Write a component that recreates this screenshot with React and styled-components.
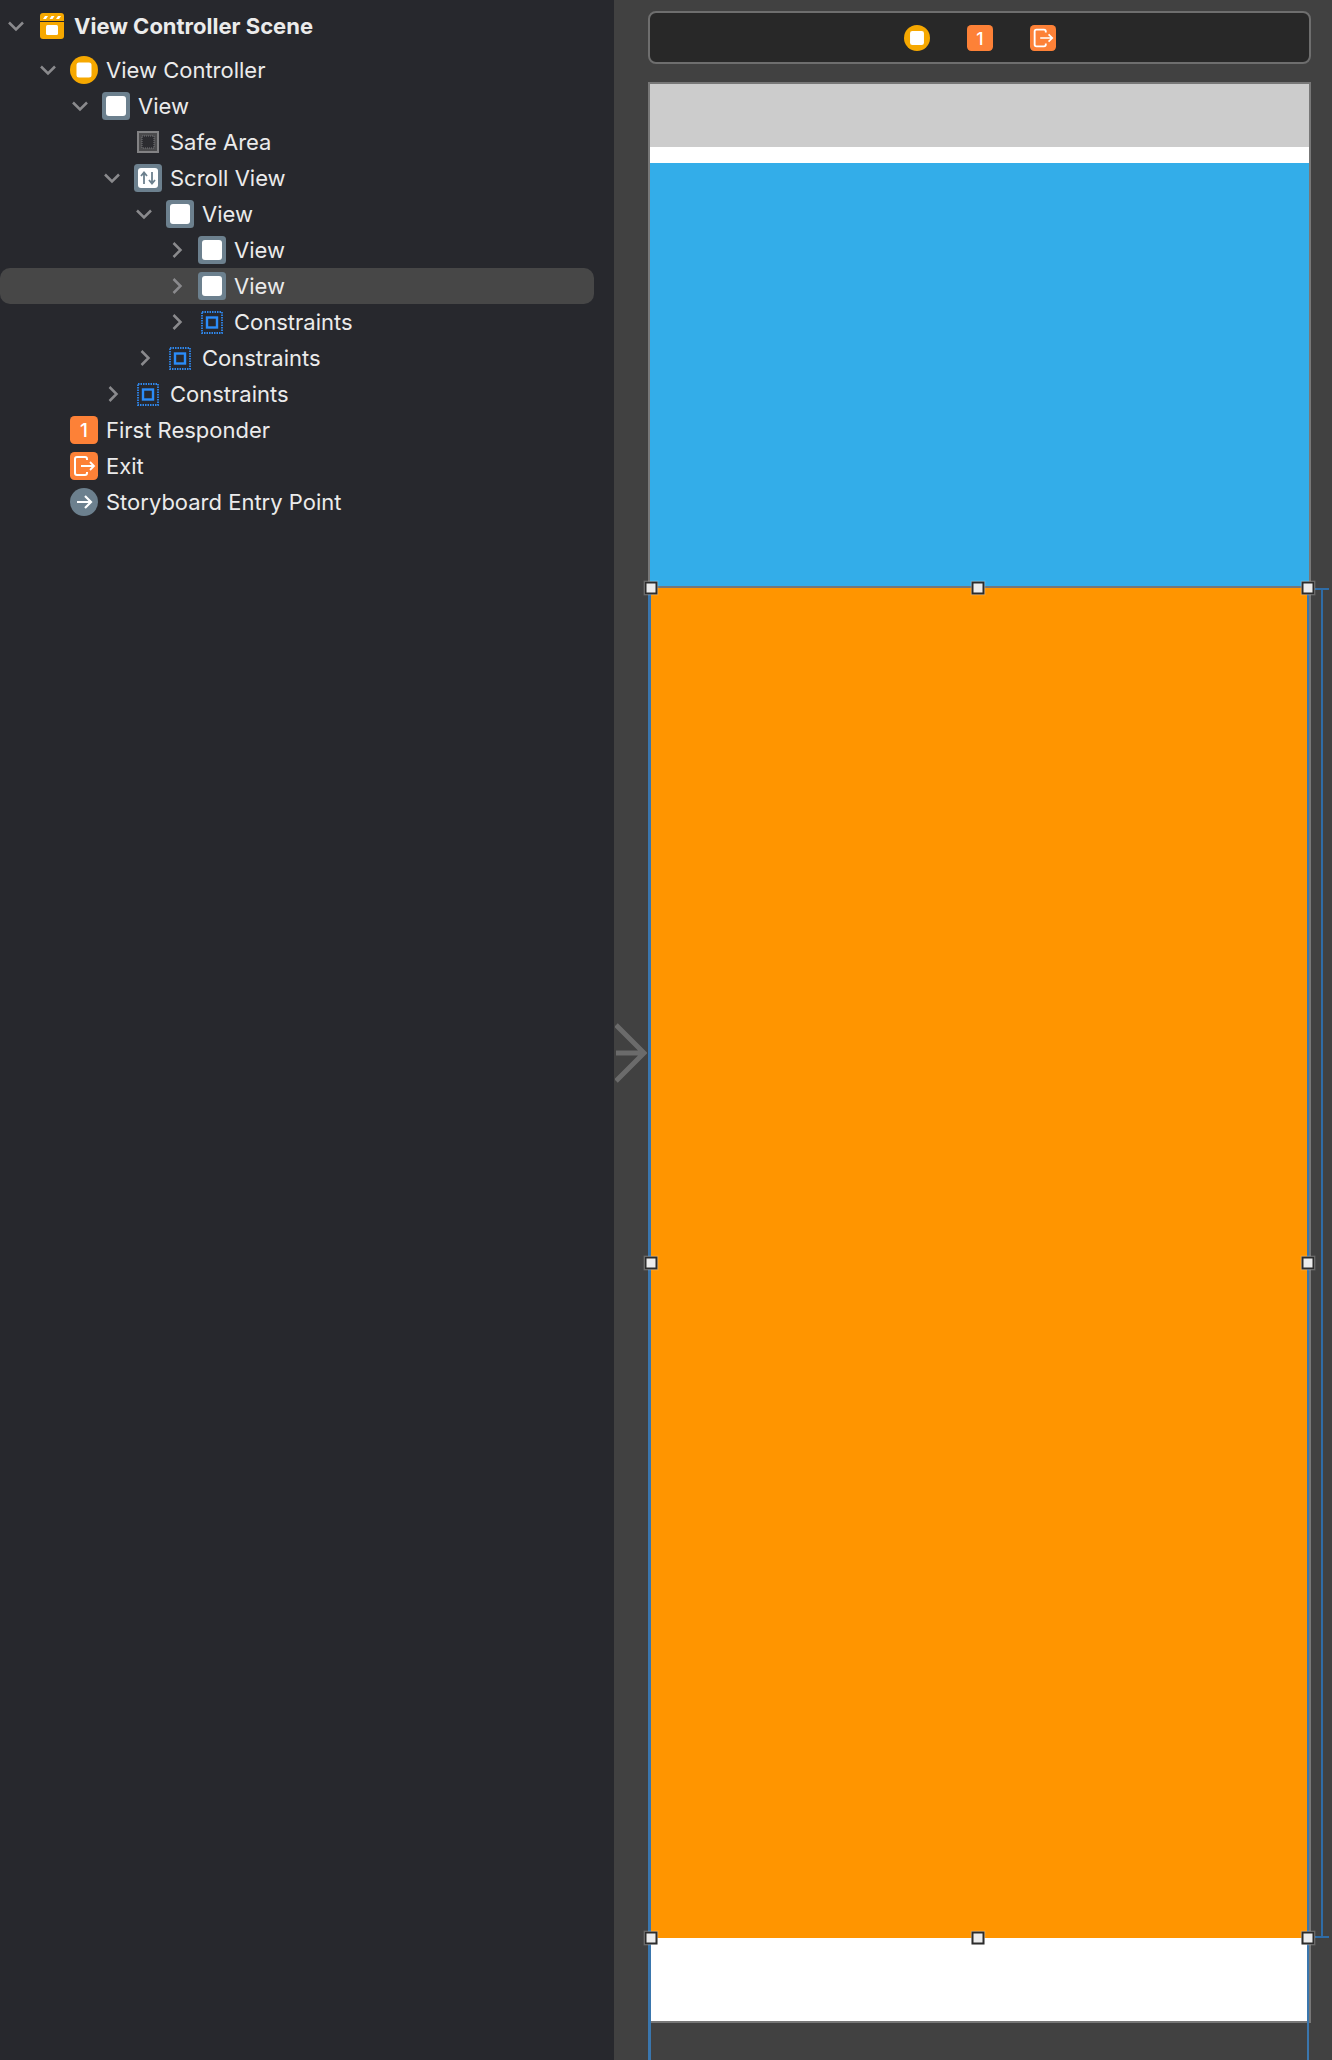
import React from "react";
import styled, { createGlobalStyle } from "styled-components";

const GlobalStyle = createGlobalStyle`
  html, body {
    margin: 0;
    padding: 0;
    background: #414141;
  }
`;

const treeItems = [
  { label: "View Controller", level: 1, arrow: "down", icon: "controller" },
  { label: "View", level: 2, arrow: "down", icon: "view" },
  { label: "Safe Area", level: 3, icon: "safe" },
  { label: "Scroll View", level: 3, arrow: "down", icon: "scroll" },
  { label: "View", level: 4, arrow: "down", icon: "view" },
  { label: "View", level: 5, arrow: "right", icon: "view" },
  { label: "View", level: 5, arrow: "right", icon: "view", selected: true },
  { label: "Constraints", level: 5, arrow: "right", icon: "constraints" },
  { label: "Constraints", level: 4, arrow: "right", icon: "constraints" },
  { label: "Constraints", level: 3, arrow: "right", icon: "constraints" },
  { label: "First Responder", level: 1, icon: "responder" },
  { label: "Exit", level: 1, icon: "exit" },
  { label: "Storyboard Entry Point", level: 1, icon: "entry" },
];

const handles = [
  ["0.2%", "0%"],
  ["49.8%", "0%"],
  ["99.8%", "0%"],
  ["0.2%", "50%"],
  ["99.8%", "50%"],
  ["0.2%", "100%"],
  ["49.8%", "100%"],
  ["99.8%", "100%"],
];

const Icon = ({ name, size = 28 }) => {
  if (name === "scene") {
    return (
      <svg width="24" height="26" viewBox="0 0 24 26">
        <path d="M3 0h18a3 3 0 0 1 3 3v5H0V3a3 3 0 0 1 3-3z" fill="#f6a800" />
        <path d="M0 9h24v14a3 3 0 0 1-3 3H3a3 3 0 0 1-3-3z" fill="#f6a800" />
        <path d="M3 6l2-3h3L6 6zM9.5 6l2-3h3l-2 3zM16 6l2-3h3l-2 3z" fill="#fff" />
        <rect x="6" y="12" width="12" height="10" rx="1.5" fill="#fff" />
      </svg>
    );
  }
  if (name === "controller") {
    return (
      <svg width={size} height={size} viewBox="0 0 28 28">
        <circle cx="14" cy="14" r="14" fill="#f6a800" />
        <rect x="6.5" y="6.5" width="15" height="15" rx="2.5" fill="#fff" />
      </svg>
    );
  }
  if (name === "view") {
    return (
      <svg width={size} height={size} viewBox="0 0 28 28">
        <rect width="28" height="28" rx="3.5" fill="#6c808e" />
        <rect x="4" y="4" width="20" height="20" rx="3" fill="#fff" />
      </svg>
    );
  }
  if (name === "safe") {
    return (
      <svg width={size} height={size} viewBox="0 0 28 28">
        <rect x="4" y="4" width="20" height="20" fill="#4a4a4c" stroke="#828284" strokeWidth="2" />
        <rect x="8" y="8" width="12" height="12" fill="#2c2c30" stroke="#77777a" strokeWidth="1" strokeDasharray="1 1" />
      </svg>
    );
  }
  if (name === "scroll") {
    return (
      <svg width={size} height={size} viewBox="0 0 28 28">
        <rect width="28" height="28" rx="3.5" fill="#6c808e" />
        <rect x="4" y="4" width="20" height="20" rx="3" fill="#fff" />
        <path d="M10 20V9M7 12l3-3.500 3 3.500M18 8v11M15 16l3 3.500 3-3.500" fill="none" stroke="#6c808e" strokeWidth="1.8" />
      </svg>
    );
  }
  if (name === "constraints") {
    return (
      <svg width={size} height={size} viewBox="0 0 28 28">
        <rect x="4" y="4" width="20" height="21" fill="none" stroke="#2f86ea" strokeWidth="1.8" strokeDasharray="1.500 1" />
        <rect x="9" y="9.500" width="10" height="10" fill="none" stroke="#2b8cf8" strokeWidth="2.400" />
      </svg>
    );
  }
  if (name === "responder") {
    return (
      <svg width={size} height={size} viewBox="0 0 28 28">
        <rect width="28" height="28" rx="4.500" fill="#fd8137" />
        <text x="14" y="21" textAnchor="middle" fontFamily="Inter, sans-serif" fontSize="19" fontWeight="500" fill="#fff">1</text>
      </svg>
    );
  }
  if (name === "exit") {
    return (
      <svg width={size} height={size} viewBox="0 0 28 28">
        <rect width="28" height="28" rx="4.500" fill="#fd8137" />
        <path d="M17 8V7a2 2 0 0 0-2-2H7a2 2 0 0 0-2 2v14a2 2 0 0 0 2 2h8a2 2 0 0 0 2-2v-1" fill="none" stroke="#fff" strokeWidth="2" />
        <path d="M11 14h13M20 10l4 4-4 4" fill="none" stroke="#fff" strokeWidth="1.800" />
      </svg>
    );
  }
  return (
    <svg width={size} height={size} viewBox="0 0 28 28">
      <circle cx="14" cy="14" r="14" fill="#6c808e" />
      <path d="M7 14h14M15 8l6 6-6 6" fill="none" stroke="#fff" strokeWidth="2.200" />
    </svg>
  );
};

const Chevron = ({ direction }) => (
  <svg width="18" height="18" viewBox="0 0 18 18">
    <path
      d={direction === "down" ? "M2 5.500l7 7 7-7" : "M6.500 2l7 7-7 7"}
      fill="none"
      stroke="#8a8a8d"
      strokeWidth="2.500"
    />
  </svg>
);

const TreeRow = ({ item }) => (
  <Row $level={item.level} $selected={item.selected}>
    <ArrowSlot>{item.arrow && <Chevron direction={item.arrow} />}</ArrowSlot>
    <IconSlot>
      <Icon name={item.icon} />
    </IconSlot>
    <RowLabel>{item.label}</RowLabel>
  </Row>
);

const App = () => {
  return (
    <Page>
      <GlobalStyle />
      <Sidebar>
        <SceneRow>
          <ArrowSlot>
            <Chevron direction="down" />
          </ArrowSlot>
          <IconSlot>
            <Icon name="scene" />
          </IconSlot>
          <SceneLabel>View Controller Scene</SceneLabel>
        </SceneRow>
        {treeItems.map((item, i) => (
          <TreeRow key={i} item={item} />
        ))}
      </Sidebar>
      <Canvas>
        <EntryArrow width="32" height="60" viewBox="0 0 32 60">
          <path d="M1 2l28 28L1 58M1 30h28" fill="none" stroke="#6b6b6b" strokeWidth="5" />
        </EntryArrow>
        <Toolbar>
          <Icon name="controller" size={26} />
          <Icon name="responder" size={26} />
          <Icon name="exit" size={26} />
        </Toolbar>
        <SceneFrame>
          <NavBar />
          <WhiteGap />
          <BlueView />
          <OrangeView>
            <SelectionLine $side="left" />
            <SelectionLine $side="right" />
            <HeightGuide />
            {handles.map(([x, y], i) => (
              <Handle key={i} $x={x} $y={y} />
            ))}
          </OrangeView>
          <BottomArea />
        </SceneFrame>
      </Canvas>
    </Page>
  );
};

const Page = styled.div`
  display: flex;
  width: 1332px;
  height: 2060px;
  overflow: hidden;
  font-family: Inter, "Liberation Sans", sans-serif;
`;

const Sidebar = styled.div`
  width: 594px;
  padding: 8px 20px 0 0;
  background: #27282d;
  flex-shrink: 0;
`;

const Row = styled.div`
  display: flex;
  align-items: center;
  height: 36px;
  padding-left: ${(p) => 4 + p.$level * 32}px;
  border-radius: 10px;
  background: ${(p) => (p.$selected ? "#474747" : "transparent")};
`;

const SceneRow = styled(Row)`
  padding-left: 4px;
  margin-bottom: 8px;
`;

const ArrowSlot = styled.div`
  display: flex;
  align-items: center;
  justify-content: center;
  width: 24px;
  height: 24px;
  margin-right: 10px;
`;

const IconSlot = styled.div`
  display: flex;
  align-items: center;
  justify-content: center;
  width: 28px;
  height: 28px;
  margin-right: 8px;
`;

const RowLabel = styled.span`
  font-size: 22px;
  color: #ebebeb;
  white-space: nowrap;
`;

const SceneLabel = styled(RowLabel)`
  font-weight: 700;
`;

const Canvas = styled.div`
  position: relative;
  flex: 1;
  padding: 11px 21px 0 35px;
  background: #414141;
`;

const EntryArrow = styled.svg`
  position: absolute;
  left: 1px;
  top: 1023px;
`;

const Toolbar = styled.div`
  display: flex;
  align-items: center;
  justify-content: center;
  gap: 37px;
  height: 48px;
  padding: 1px 0 0 1px;
  margin-bottom: 18px;
  margin-left: -1px;
  border: 2px solid #6e6e6e;
  border-radius: 8px;
  background: #282828;
`;

const SceneFrame = styled.div`
  margin-left: -1px;
  border: 2px solid #777;
  display: flex;
  flex-direction: column;
`;

const NavBar = styled.div`
  height: 63px;
  background: #cccccc;
`;

const WhiteGap = styled.div`
  height: 16px;
  background: #fff;
`;

const BlueView = styled.div`
  height: 423px;
  background: #33ade9;
  border-bottom: 2px solid #777;
`;

const OrangeView = styled.div`
  position: relative;
  height: 1350px;
  background: #ff9500;
`;

const BottomArea = styled.div`
  height: 83px;
  background: #fff;
`;

const SelectionLine = styled.div`
  position: absolute;
  top: 0;
  ${(p) => (p.$side === "left" ? "left: -2px; width: 3px;" : "right: 0; width: 2px;")}
  height: 1472px;
  background: #3a76ad;
`;

const HeightGuide = styled.div`
  position: absolute;
  top: 0;
  left: calc(100% + 6px);
  width: 14px;
  height: 100%;
  border-top: 2px solid #2f6ca6;
  border-bottom: 2px solid #2f6ca6;
  box-sizing: border-box;

  &::after {
    content: "";
    position: absolute;
    left: 6px;
    top: 0;
    bottom: 0;
    width: 2px;
    background: #2f6ca6;
  }
`;

const Handle = styled.div`
  position: absolute;
  left: ${(p) => p.$x};
  top: ${(p) => p.$y};
  width: 9px;
  height: 9px;
  transform: translate(-50%, -50%);
  border: 2px solid #2c2c2c;
  background: #ececec;
  box-shadow: 0 0 0 1px rgba(255, 255, 255, 0.15);
`;

export default App;
